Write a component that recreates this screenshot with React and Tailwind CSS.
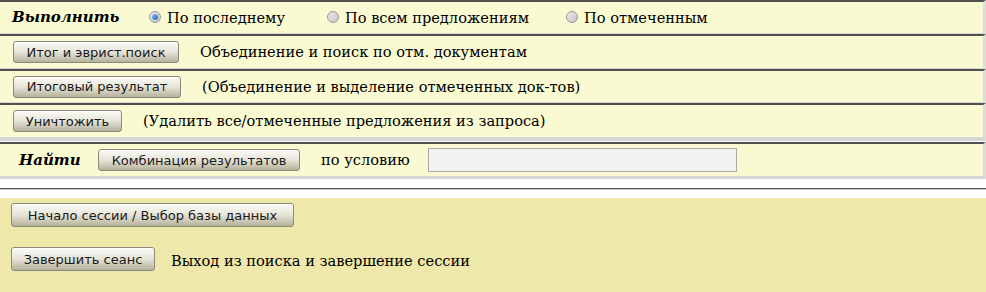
import React, { useState } from "react";

function Btn({ children, className = "" }) {
  return (
    <button
      type="button"
      className={
        "h-[22px] px-[8px] rounded-[3px] border border-[#8c8a7c] bg-gradient-to-b from-[#fbfbf7] via-[#e6e4d8] to-[#b5b29b] font-['DejaVu_Sans',sans-serif] text-[13px] leading-none text-[#1a1a1a] whitespace-nowrap shadow-[inset_0_1px_0_#ffffff] " +
        className
      }
    >
      {children}
    </button>
  );
}

function Radio({ checked, label, onClick }) {
  return (
    <label className="flex items-center cursor-pointer" onClick={onClick}>
      <span className="w-[12px] h-[12px] rounded-full border border-[#9a9a9a] bg-gradient-to-br from-[#ececec] to-[#c4c4c4] flex items-center justify-center">
        {checked && (
          <span className="w-[6px] h-[6px] rounded-full bg-gradient-to-br from-[#8cc2f2] to-[#1d5fb0]" />
        )}
      </span>
      <span className="ml-[6px]">{label}</span>
    </label>
  );
}

const row =
  "flex items-center bg-[#fafad2] border-t-2 border-t-[#4f4f4f] border-b border-b-[#d6d6d6] border-r-[3px] border-r-[#dcdcdc]";

export default function App() {
  const [mode, setMode] = useState(0);

  return (
    <div className="w-[986px] h-[292px] bg-white text-[14.6px] text-black overflow-hidden font-['DejaVu_Serif',serif]">
      <div className={row + " h-[34px]"}>
        <span className="ml-[12px] w-[137px] font-bold italic text-[15px]">Выполнить</span>
        <div className="w-[178px]">
          <Radio checked={mode === 0} label="По последнему" onClick={() => setMode(0)} />
        </div>
        <div className="w-[239px]">
          <Radio checked={mode === 1} label="По всем предложениям" onClick={() => setMode(1)} />
        </div>
        <Radio checked={mode === 2} label="По отмеченным" onClick={() => setMode(2)} />
      </div>

      <div className={row + " h-[35px]"}>
        <Btn className="ml-[13px] w-[166px]">Итог и эврист.поиск</Btn>
        <span className="ml-[21px]">Объединение и поиск по отм. документам</span>
      </div>

      <div className={row + " h-[34px]"}>
        <Btn className="ml-[13px] w-[168px]">Итоговый результат</Btn>
        <span className="ml-[21px]">(Объединение и выделение отмеченных док-тов)</span>
      </div>

      <div className={row + " h-[38px] border-b-4"}>
        <Btn className="ml-[13px] w-[109px]">Уничтожить</Btn>
        <span className="ml-[21px]">(Удалить все/отмеченные предложения из запроса)</span>
      </div>

      <div className={row + " h-[37px] border-b-[3px] mt-[1px]"}>
        <span className="ml-[19px] w-[79px] font-bold italic text-[15px]">Найти</span>
        <Btn className="w-[202px]">Комбинация результатов</Btn>
        <span className="ml-[21px] w-[107px]">по условию</span>
        <input
          type="text"
          className="w-[309px] h-[24px] bg-[#f2f2f2] border border-[#a9a9a9] outline-none"
        />
      </div>

      <div className="h-[9px]" />
      <div className="h-[2px] border-t border-t-[#555] border-b border-b-[#ccc]" />
      <div className="h-[8px]" />

      <div className="bg-[#eee8aa] h-[94px] pt-[5px]">
        <Btn className="ml-[11px] w-[283px] h-[24px]">Начало сессии / Выбор базы данных</Btn>
        <div className="flex items-center mt-[20px]">
          <Btn className="ml-[11px] w-[144px] h-[24px]">Завершить сеанс</Btn>
          <span className="ml-[16px] pt-[3px]">Выход из поиска и завершение сессии</span>
        </div>
      </div>
    </div>
  );
}
